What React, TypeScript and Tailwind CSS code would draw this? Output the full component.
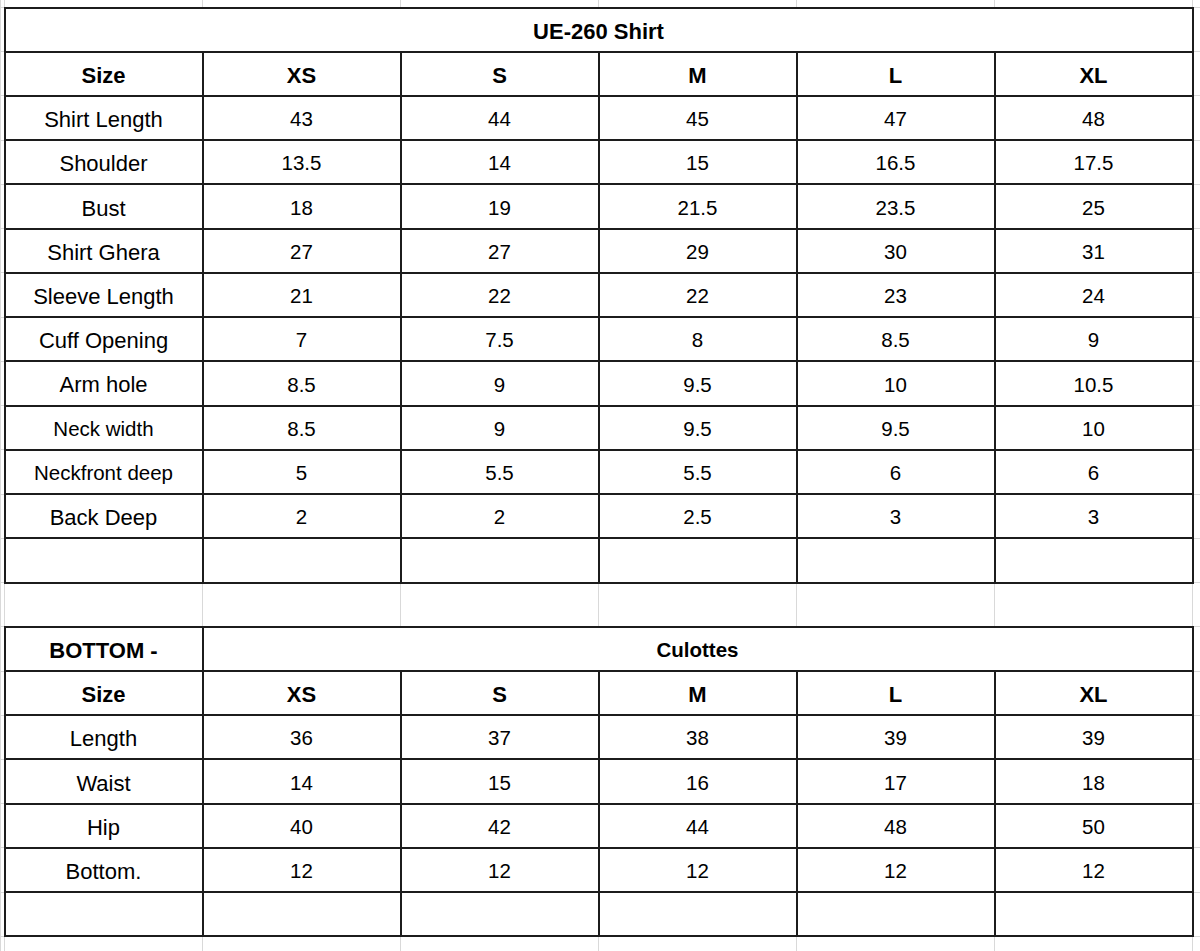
const sizes = ["XS", "S", "M", "L", "XL"];

type Row = { label: string; small?: boolean; values: string[] };

const shirtRows: Row[] = [
  { label: "Shirt Length", values: ["43", "44", "45", "47", "48"] },
  { label: "Shoulder", values: ["13.5", "14", "15", "16.5", "17.5"] },
  { label: "Bust", values: ["18", "19", "21.5", "23.5", "25"] },
  { label: "Shirt Ghera", values: ["27", "27", "29", "30", "31"] },
  { label: "Sleeve Length", values: ["21", "22", "22", "23", "24"] },
  { label: "Cuff Opening", values: ["7", "7.5", "8", "8.5", "9"] },
  { label: "Arm hole", values: ["8.5", "9", "9.5", "10", "10.5"] },
  { label: "Neck width", small: true, values: ["8.5", "9", "9.5", "9.5", "10"] },
  { label: "Neckfront deep", small: true, values: ["5", "5.5", "5.5", "6", "6"] },
  { label: "Back Deep", values: ["2", "2", "2.5", "3", "3"] },
];

const bottomRows: Row[] = [
  { label: "Length", values: ["36", "37", "38", "39", "39"] },
  { label: "Waist", values: ["14", "15", "16", "17", "18"] },
  { label: "Hip", values: ["40", "42", "44", "48", "50"] },
  { label: "Bottom.", values: ["12", "12", "12", "12", "12"] },
];

const cell = "border-2 border-[#1c1c1c] text-center align-middle px-0 pb-0 pt-[3px]";
const gray = "border border-[#d9d9d9] p-0";
const rowH = "h-[44.24px]";

function Gutter() {
  return <td className={gray} />;
}

function SizeRow() {
  return (
    <tr className={rowH}>
      <Gutter />
      <td className={`${cell} text-[22px] font-bold`}>Size</td>
      {sizes.map((s) => (
        <td key={s} className={`${cell} text-[22px] font-bold`}>
          {s}
        </td>
      ))}
      <Gutter />
    </tr>
  );
}

function DataRow({ row }: { row: Row }) {
  return (
    <tr className={rowH}>
      <Gutter />
      <td className={`${cell} ${row.small ? "text-[20.5px]" : "text-[22px]"}`}>{row.label}</td>
      {row.values.map((v, i) => (
        <td key={i} className={`${cell} text-[20.5px]`}>
          {v}
        </td>
      ))}
      <Gutter />
    </tr>
  );
}

function EmptyRow() {
  return (
    <tr className={rowH}>
      <Gutter />
      {[0, 1, 2, 3, 4, 5].map((i) => (
        <td key={i} className={cell} />
      ))}
      <Gutter />
    </tr>
  );
}

function GrayRow({ h }: { h: string }) {
  return (
    <tr className={h}>
      {[0, 1, 2, 3, 4, 5, 6, 7].map((i) => (
        <td key={i} className={gray} />
      ))}
    </tr>
  );
}

export default function App() {
  return (
    <div className="w-[1200px] h-[951px] overflow-hidden bg-white text-black font-['Liberation_Sans',Arial,sans-serif]">
      <table className="w-[1200px] table-fixed border-collapse -mt-px">
        <colgroup>
          <col className="w-[4px]" />
          <col className="w-[198px]" />
          <col className="w-[198px]" />
          <col className="w-[198px]" />
          <col className="w-[198px]" />
          <col className="w-[198px]" />
          <col className="w-[198px]" />
          <col className="w-[8px]" />
        </colgroup>
        <tbody>
          <GrayRow h="h-[8px]" />
          <tr className={rowH}>
            <Gutter />
            <td colSpan={6} className={`${cell} text-[22px] font-bold`}>
              UE-260 Shirt
            </td>
            <Gutter />
          </tr>
          <SizeRow />
          {shirtRows.map((r) => (
            <DataRow key={r.label} row={r} />
          ))}
          <EmptyRow />
          <GrayRow h={rowH} />
          <tr className={rowH}>
            <Gutter />
            <td className={`${cell} text-[22px] font-bold`}>BOTTOM -</td>
            <td colSpan={5} className={`${cell} text-[20.5px] font-bold`}>
              Culottes
            </td>
            <Gutter />
          </tr>
          <SizeRow />
          {bottomRows.map((r) => (
            <DataRow key={r.label} row={r} />
          ))}
          <EmptyRow />
          <GrayRow h="h-[20px]" />
        </tbody>
      </table>
    </div>
  );
}
